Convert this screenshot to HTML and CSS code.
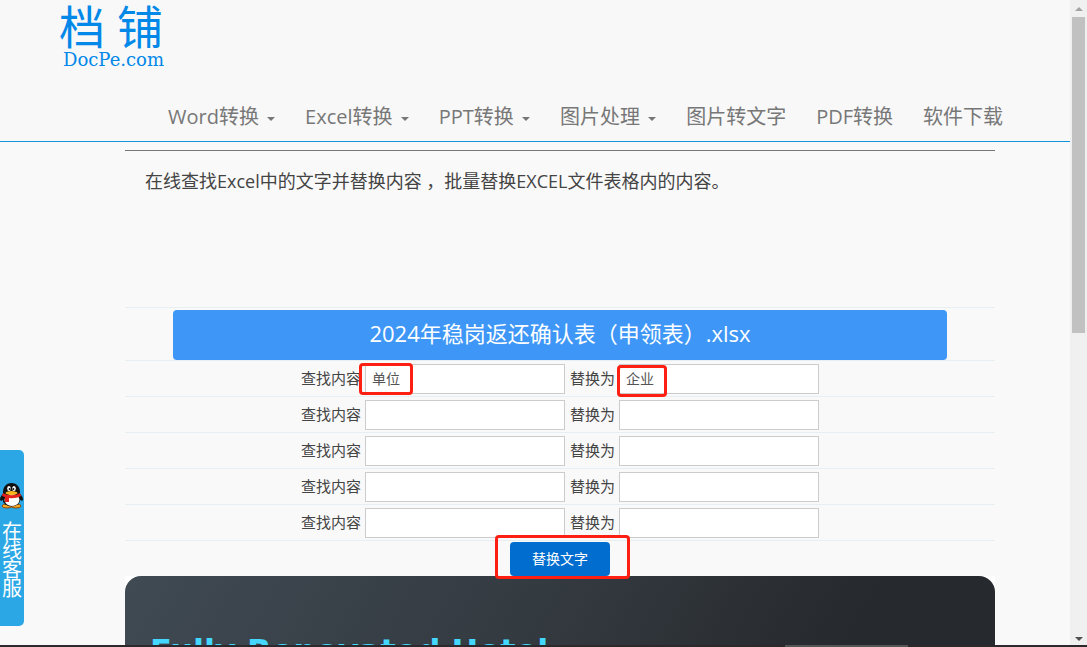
FILE: index.html
```html
<!DOCTYPE html>
<html lang="zh-CN">
<head>
    <meta charset="UTF-8">
    <meta name="viewport" content="width=device-width, initial-scale=1.0">
    <title>在线查找替换Excel文字 - 档铺</title>
    <link rel="stylesheet" href="styles.css">
</head>
<body>
    <div class="window">
        <div class="page">
            <header class="header">
                <a class="logo" href="#">
                    <span class="logo-name">档 铺</span>
                    <span class="logo-site">DocPe.com</span>
                </a>
                <nav class="nav">
                    <a href="#">Word转换 <span class="caret"></span></a>
                    <a href="#">Excel转换 <span class="caret"></span></a>
                    <a href="#">PPT转换 <span class="caret"></span></a>
                    <a href="#">图片处理 <span class="caret"></span></a>
                    <a href="#">图片转文字</a>
                    <a href="#">PDF转换</a>
                    <a href="#">软件下载</a>
                </nav>
            </header>

            <main class="content">
                <p class="intro">在线查找Excel中的文字并替换内容 ，批量替换EXCEL文件表格内的内容。</p>

                <form class="replace-form">
                    <div class="row">
                        <div class="file-name">2024年稳岗返还确认表（申领表）.xlsx</div>
                    </div>
                    <div class="row">
                        <label for="find1">查找内容</label>
                        <span class="field"><input type="text" id="find1" value="单位"><span class="mark mark-find"></span></span>
                        <label class="to" for="to1">替换为</label>
                        <span class="field"><input type="text" id="to1" value="企业"><span class="mark mark-to"></span></span>
                    </div>
                    <div class="row">
                        <label for="find2">查找内容</label>
                        <span class="field"><input type="text" id="find2"></span>
                        <label class="to" for="to2">替换为</label>
                        <span class="field"><input type="text" id="to2"></span>
                    </div>
                    <div class="row">
                        <label for="find3">查找内容</label>
                        <span class="field"><input type="text" id="find3"></span>
                        <label class="to" for="to3">替换为</label>
                        <span class="field"><input type="text" id="to3"></span>
                    </div>
                    <div class="row">
                        <label for="find4">查找内容</label>
                        <span class="field"><input type="text" id="find4"></span>
                        <label class="to" for="to4">替换为</label>
                        <span class="field"><input type="text" id="to4"></span>
                    </div>
                    <div class="row">
                        <label for="find5">查找内容</label>
                        <span class="field"><input type="text" id="find5"></span>
                        <label class="to" for="to5">替换为</label>
                        <span class="field"><input type="text" id="to5"></span>
                    </div>
                    <div class="row row-submit">
                        <span class="field"><button type="button">替换文字</button><span class="mark mark-submit"></span></span>
                    </div>
                </form>

                <div class="ad">
                    <div class="ad-inner">
                        <h2>Fully Renovated Hotel</h2>
                    </div>
                </div>
            </main>
        </div>

        <div class="scrollbar">
            <span class="arrow-up"></span>
            <span class="thumb"></span>
            <span class="arrow-down"></span>
        </div>
    </div>
    <div class="taskbar"><span class="taskbar-item"></span></div>

    <a class="service" href="#">
        <svg width="24" height="28" viewBox="0 0 24 28">
            <path d="M4 11C0 14-1 18 1 19l3-2zM19 11c4 3 5 7 3 8l-3-2z" fill="#111"/>
            <ellipse cx="7" cy="24" rx="5" ry="2" fill="#f5a623" stroke="#8a4b08"/>
            <ellipse cx="16" cy="24" rx="5" ry="2" fill="#f5a623" stroke="#8a4b08"/>
            <ellipse cx="11.500" cy="17" rx="9" ry="7.500" fill="#111"/>
            <ellipse cx="12" cy="18" rx="7.500" ry="6" fill="#fff"/>
            <path d="M3 12C2.500 5 6 1 11.500 1S20.500 5 20 12z" fill="#111"/>
            <ellipse cx="9" cy="6.500" rx="1.800" ry="2.500" fill="#fff"/>
            <ellipse cx="14" cy="6.500" rx="1.800" ry="2.500" fill="#fff"/>
            <circle cx="9.600" cy="7" r="1" fill="#111"/>
            <circle cx="13.400" cy="7" r="1" fill="#111"/>
            <path d="M3 11c5 3 12 3 17 0l1 3c-4 2-8 2.500-12 2v4H5v-5l-3-1z" fill="#e3231b"/>
            <ellipse cx="11.500" cy="11" rx="6" ry="1.900" fill="#f9b51b"/>
        </svg>
        <span>在线客服</span>
    </a>
</body>
</html>
```
FILE: styles.css
```css
* {
    box-sizing: border-box;
}

body {
    margin: 0;
    height: 100vh;
    display: flex;
    flex-direction: column;
    overflow: hidden;
    background-color: #f9f9f9;
    font-family: "Open Sans", "Noto Sans CJK SC", sans-serif;
    font-size: 15px;
    color: #444;
}

a {
    text-decoration: none;
}

.window {
    flex: 1;
    min-height: 0;
    display: flex;
}

.page {
    flex: 1;
    overflow: hidden;
}

/* header */
.header {
    height: 142px;
    display: flex;
    flex-direction: column;
    justify-content: space-between;
    background-color: #f8f8f8;
    border-bottom: 1px solid #1296db;
}

.logo {
    display: flex;
    flex-direction: column;
    width: 120px;
    margin-left: 59px;
    color: #0288e8;
}

.logo-name {
    font-size: 46px;
    line-height: 52px;
    white-space: nowrap;
}

.logo-site {
    padding-left: 4px;
    font-family: "DejaVu Serif", serif;
    font-size: 18px;
    line-height: 16px;
}

.nav {
    display: flex;
    gap: 30px;
    padding-left: 168px;
    font-size: 20px;
    line-height: 48px;
    white-space: nowrap;
}

.nav a {
    color: #777;
}

.caret {
    display: inline-block;
    margin-left: 3px;
    vertical-align: middle;
    border-top: 4px solid #777;
    border-left: 4px solid transparent;
    border-right: 4px solid transparent;
}

/* content */
.content {
    margin: 8px 75px 0 125px;
    border-top: 1px solid #777;
}

.intro {
    margin: 0;
    padding: 15px 20px 111px;
    font-size: 18px;
    line-height: 30px;
}

.row {
    display: flex;
    align-items: center;
    justify-content: center;
    gap: 4px;
    padding: 3px 0 2px;
    border-top: 1px solid #e6f0f2;
    white-space: nowrap;
}

.row:first-child {
    padding: 2px 48px 0;
}

.file-name {
    flex: 1;
    height: 50px;
    border-radius: 4px;
    background-color: #3e97f7;
    color: #fff;
    font-size: 22px;
    line-height: 46px;
    text-align: center;
}

label {
    padding-bottom: 4px;
}

.field {
    position: relative;
    display: flex;
}

.to {
    margin-left: 1px;
}

input {
    width: 200px;
    height: 30px;
    padding: 0 6px 2px;
    border: 1px solid #ccc;
    background-color: #fff;
    color: #555;
    font-family: inherit;
    font-size: 14px;
}

.row-submit {
    padding: 1px 0 0;
}

button {
    width: 100px;
    height: 34px;
    padding: 0 0 2px;
    border: none;
    border-radius: 4px;
    background-color: #006dcf;
    color: #fff;
    font-family: inherit;
    font-size: 14px;
    cursor: pointer;
}

/* red highlight boxes */
.mark {
    position: absolute;
    border: 3px solid #fd1f12;
    border-radius: 4px;
    pointer-events: none;
}

.mark-find {
    left: -6px;
    top: -1px;
    width: 54px;
    height: 32px;
}

.mark-to {
    left: -2px;
    top: 1px;
    width: 50px;
    height: 32px;
}

.mark-submit {
    inset: -7px -20px -3px -15px;
}

.ad {
    background-color: #fff;
}

.ad-inner {
    padding: 57px 25px;
    border-radius: 16px;
    background: linear-gradient(120deg, #404a53 0%, #32383e 50%, #26292d 80%, #26292d 100%);
}

.ad h2 {
    margin: 0;
    font-family: "DejaVu Sans", sans-serif;
    font-size: 32px;
    line-height: 36px;
    color: #44d7ff;
}

/* scrollbar */
.scrollbar {
    width: 17px;
    display: flex;
    flex-direction: column;
    align-items: center;
    padding: 7px 0 4px;
    background-color: #f0f0f0;
}

.arrow-up {
    border-bottom: 4px solid #a3a3a3;
    border-left: 4px solid transparent;
    border-right: 4px solid transparent;
}

.thumb {
    width: 13px;
    height: 316px;
    margin-top: 6px;
    background-color: #c1c1c1;
}

.arrow-down {
    margin-top: auto;
    border-top: 4px solid #505050;
    border-left: 4px solid transparent;
    border-right: 4px solid transparent;
}

.taskbar {
    display: flex;
    justify-content: flex-end;
    height: 2px;
    padding-right: 179px;
    background-color: #2b292b;
}

.taskbar-item {
    width: 123px;
    background-color: #555;
}

/* floating service tab */
.service {
    position: fixed;
    left: 0;
    top: 450px;
    width: 24px;
    display: flex;
    flex-direction: column;
    align-items: center;
    gap: 12px;
    padding: 32px 0 28px;
    border-radius: 0 5px 5px 0;
    background-color: #2ba7e5;
    color: #fff;
    font-size: 20px;
    line-height: 19px;
}

.service span {
    width: 20px;
    word-break: break-all;
}
```
